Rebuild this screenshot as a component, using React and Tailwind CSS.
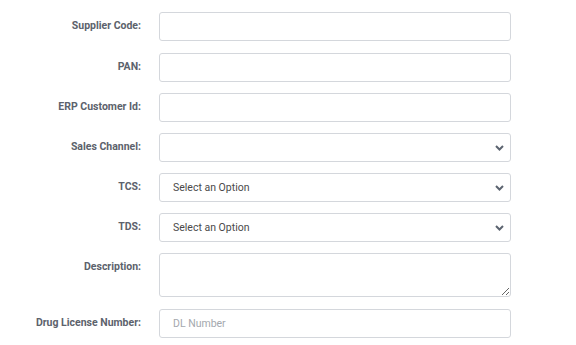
import React from "react";

const Chevron = () => (
  <svg
    className="pointer-events-none absolute right-[7px] top-1/2 -translate-y-1/2"
    width="9"
    height="6"
    viewBox="0 0 9 6"
    fill="none"
  >
    <path d="M1 1l3.5 3.5L8 1" stroke="#5c6470" strokeWidth="2" />
  </svg>
);

const Row = ({ label, children, gap = "mb-[11px]" }) => (
  <div className={`flex items-start ${gap}`}>
    <label className="w-[141px] shrink-0 pt-[6px] text-right text-[10.5px] leading-[16px] font-bold text-[#5c626c]">
      {label}
    </label>
    <div className="ml-[18px] w-[352px]">{children}</div>
  </div>
);

const inputCls =
  "block h-[29px] w-full rounded-[3px] border border-[#d4d7dc] bg-white pl-[13px] pr-[12px] text-[10.5px] text-[#4a4a4a] outline-none placeholder:text-[#a4a8ae]";

const Select = ({ value }) => (
  <div className="relative">
    <select className={`${inputCls} appearance-none`} defaultValue={value}>
      {value ? <option>{value}</option> : <option></option>}
    </select>
    <Chevron />
  </div>
);

export default function App() {
  return (
    <div
      className="min-h-[345px] w-[576px] bg-white pt-[12px]"
      style={{ fontFamily: "Roboto, 'Liberation Sans', sans-serif" }}
    >
      <Row label="Supplier Code:" gap="mb-[12px]">
        <input className={inputCls} />
      </Row>
      <Row label="PAN:">
        <input className={inputCls} />
      </Row>
      <Row label="ERP Customer Id:">
        <input className={inputCls} />
      </Row>
      <Row label="Sales Channel:">
        <Select value="" />
      </Row>
      <Row label="TCS:">
        <Select value="Select an Option" />
      </Row>
      <Row label="TDS:">
        <Select value="Select an Option" />
      </Row>
      <Row label="Description:" gap="mb-[12px]">
        <textarea className="block h-[44px] w-full rounded-[3px] border border-[#d4d7dc] bg-white px-[13px] py-[6px] text-[10.5px] text-[#444] outline-none" />
      </Row>
      <Row label="Drug License Number:" gap="">
        <input className={inputCls} placeholder="DL Number" />
      </Row>
    </div>
  );
}
